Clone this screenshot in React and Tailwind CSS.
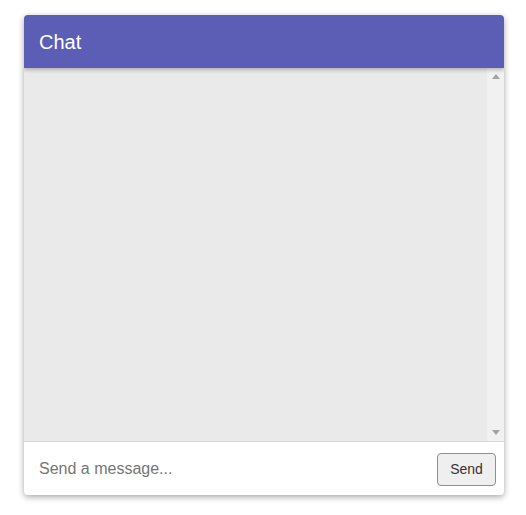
import React from "react";

export default function App() {
  return (
    <div className="w-[526px] h-[515px] bg-white pt-[15px] pl-[24px]" style={{ fontFamily: '"Liberation Sans", Arial, sans-serif' }}>
      <div className="w-[480px] h-[480px] flex flex-col rounded-[4px] bg-white shadow-[0_2px_6px_rgba(0,0,0,0.35)] overflow-hidden">
        <div className="relative z-10 h-[53px] shrink-0 bg-[#5b5eb4] flex items-center pl-[15px] text-white text-[20px] shadow-[0_2px_4px_rgba(0,0,0,0.25)]">
          Chat
        </div>
        <div className="h-[373px] shrink-0 flex bg-[#eaeaea]">
          <div className="flex-1" />
          <div className="w-[17px] bg-[#f1f1f1] flex flex-col items-center justify-between py-[6px]">
            <svg width="8" height="5" viewBox="0 0 8 5"><path d="M0 5 L4 0 L8 5 Z" fill="#a3a3a3" /></svg>
            <svg width="8" height="5" viewBox="0 0 8 5"><path d="M0 0 L8 0 L4 5 Z" fill="#a3a3a3" /></svg>
          </div>
        </div>
        <div className="h-px shrink-0 bg-[#d6d6d6]" />
        <div className="flex-1 flex items-center pl-[15px] pr-[8px]">
          <input
            className="flex-1 text-[16px] text-[#333] placeholder:text-[#757575] outline-none bg-transparent"
            placeholder="Send a message..."
          />
          <button className="w-[59px] h-[33px] mt-[2px] rounded-[4px] border border-[#8f8f8f] bg-[#efefef] text-[14px] text-[#3a3030]">
            Send
          </button>
        </div>
      </div>
    </div>
  );
}
